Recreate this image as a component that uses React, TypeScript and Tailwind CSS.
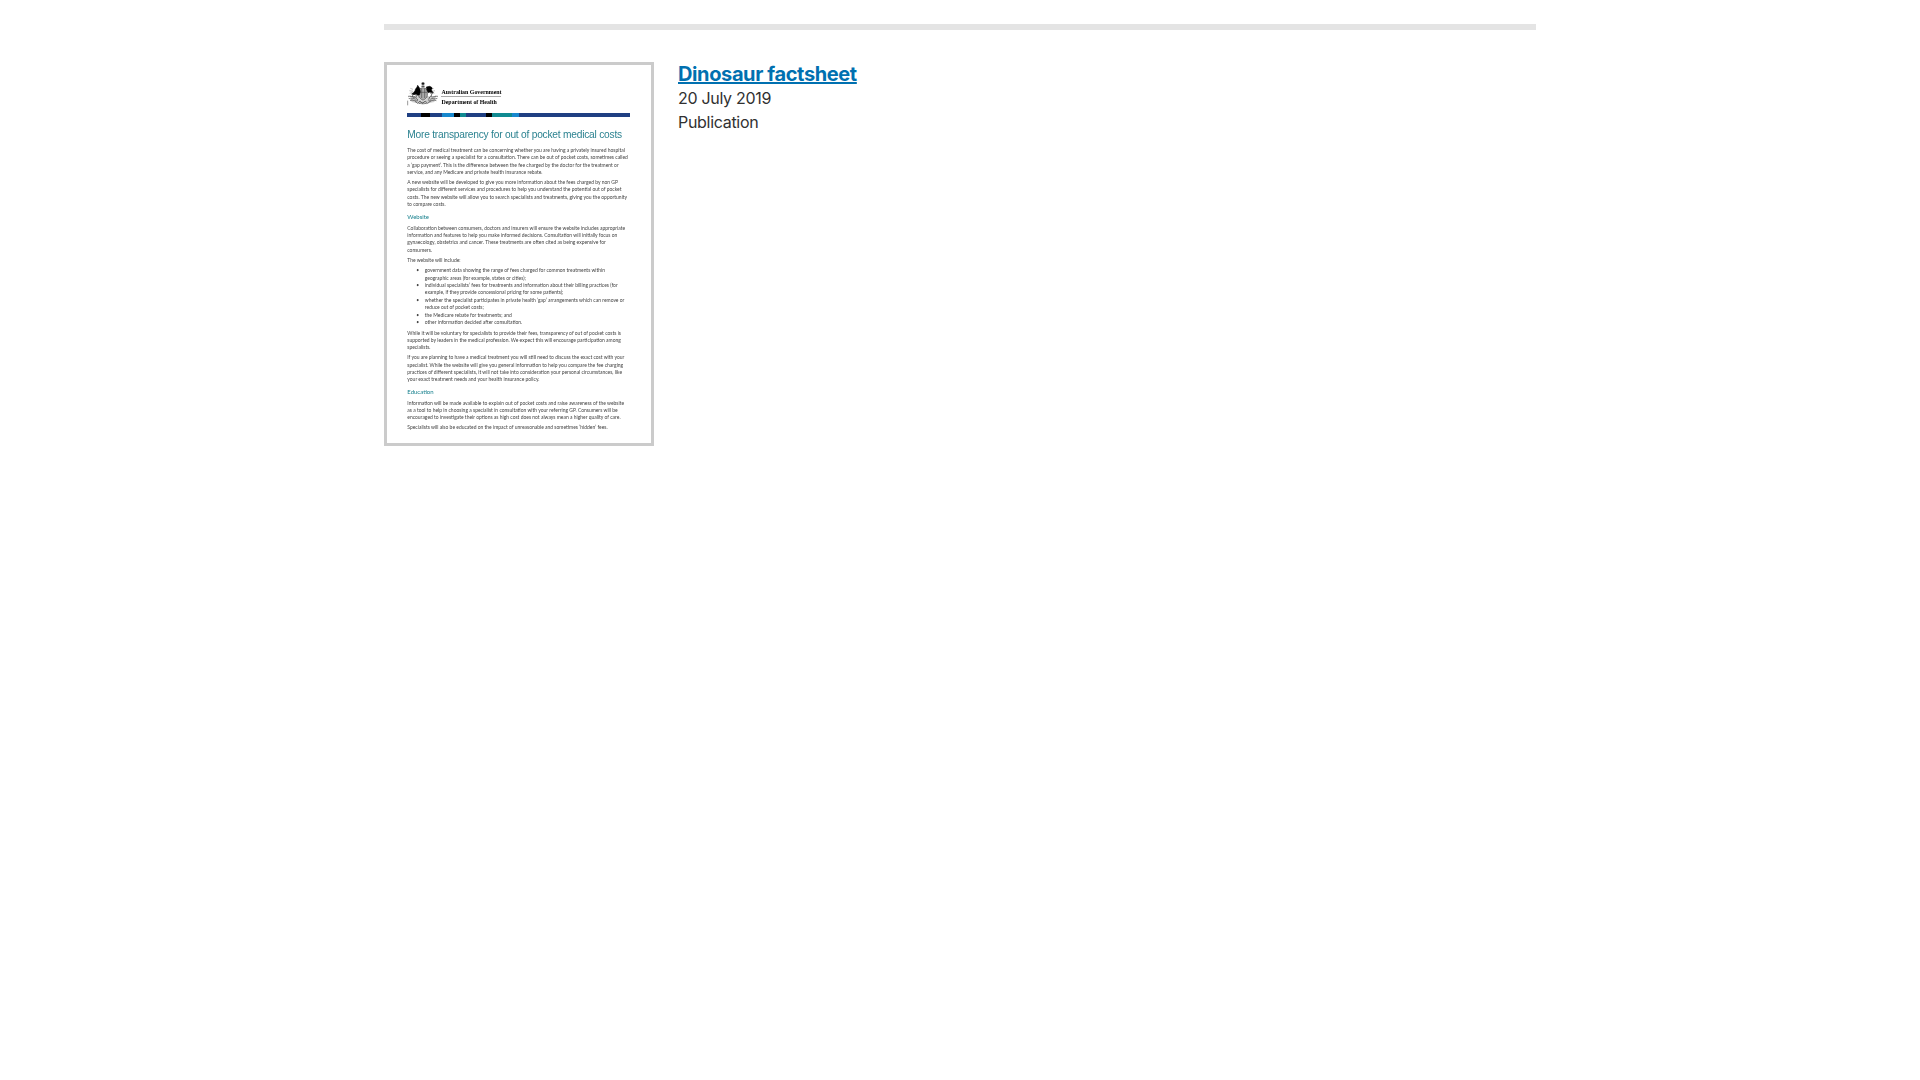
const intro = [
  [
    "The cost of medical treatment can be concerning whether you are having a privately insured hospital",
    "procedure or seeing a specialist for a consultation. There can be out of pocket costs, sometimes called",
    "a ‘gap payment’. This is the difference between the fee charged by the doctor for the treatment or",
    "service, and any Medicare and private health insurance rebate.",
  ],
  [
    "A new website will be developed to give you more information about the fees charged by non GP",
    "specialists for different services and procedures to help you understand the potential out of pocket",
    "costs. The new website will allow you to search specialists and treatments, giving you the opportunity",
    "to compare costs.",
  ],
];

const website = [
  [
    "Collaboration between consumers, doctors and insurers will ensure the website includes appropriate",
    "information and features to help you make informed decisions. Consultation will initially focus on",
    "gynaecology, obstetrics and cancer. These treatments are often cited as being expensive for",
    "consumers.",
  ],
  ["The website will include:"],
];

const bullets = [
  [
    "government data showing the range of fees charged for common treatments within",
    "geographic areas (for example, states or cities);",
  ],
  [
    "individual specialists’ fees for treatments and information about their billing practices (for",
    "example, if they provide concessional pricing for some patients);",
  ],
  [
    "whether the specialist participates in private health ‘gap’ arrangements which can remove or",
    "reduce out of pocket costs;",
  ],
  ["the Medicare rebate for treatments; and"],
  ["other information decided after consultation."],
];

const planning = [
  [
    "While it will be voluntary for specialists to provide their fees, transparency of out of pocket costs is",
    "supported by leaders in the medical profession. We expect this will encourage participation among",
    "specialists.",
  ],
  [
    "If you are planning to have a medical treatment you will still need to discuss the exact cost with your",
    "specialist. While the website will give you general information to help you compare the fee charging",
    "practices of different specialists, it will not take into consideration your personal circumstances, like",
    "your exact treatment needs and your health insurance policy.",
  ],
];

const education = [
  [
    "Information will be made available to explain out of pocket costs and raise awareness of the website",
    "as a tool to help in choosing a specialist in consultation with your referring GP. Consumers will be",
    "encouraged to investigate their options as high cost does not always mean a higher quality of care.",
  ],
  ["Specialists will also be educated on the impact of unreasonable and sometimes ‘hidden’ fees."],
];

function Paragraphs({ items }: { items: string[][] }) {
  return (
    <div className="flex flex-col gap-[3px]">
      {items.map((lines) => (
        <p key={lines[0]}>
          {lines.map((line) => (
            <span key={line} className="block">{line}</span>
          ))}
        </p>
      ))}
    </div>
  );
}

function Crest() {
  return (
    <svg viewBox="0 0 96 72" className="h-6 w-8 shrink-0" fill="none" stroke="#333" strokeWidth="1.8">
      <path d="M48 0l1.500 3 3.500 0-2.500 2.500 1 3.500-3.500-2-3.500 2 1-3.500L43 3h3.500z" fill="#111" stroke="#111" strokeWidth="1" />
      <path d="M43 13h10M48 10v5" strokeWidth="2.500" />
      <path d="M8 40q16 6 27 2l3 10 10 6 10-6 3-10q14 4 27-2l-6 20-18 4-16 4-16-4-18-4z" fill="#ccc" stroke="none" />
      <path d="M35 24q13-14 26 0v16c0 8-6 11-13 15-7-4-13-7-13-15z" fill="#aaa" />
      <path d="M36 31h24M44 20v28M53 20v28" stroke="#444" />
      <path d="M32 10l-2 6-4 4-2 6-5 7-5 3 7 2 6-2 5 4 6-2 2-10-2-9z" fill="#000" stroke="#000" />
      <path d="M58 15l10-2 6 3 2 4-3 2 2 5 4 5-3 2-7-4-5 2-4-7z" fill="#000" stroke="#000" />
      <path d="M22 36l7 5-3 7 7 6M70 32l5 7-7 6-3 8M19 38l-4 5 8 4" strokeWidth="2" />
      <path d="M3 43c8-2 15 5 22 0M5 49c9 5 14-3 21 3M9 56c9-5 16 4 24 0M93 43c-8-2-15 5-22 0M91 49c-9 5-14-3-21 3M88 56c-9-5-16 4-24 0" />
      <path d="M10 19l8 3M7 26l11 2M8 34l9-3M82 34l-9-2M84 26l-7 2M80 19l-3 3" stroke="#888" strokeWidth="1.500" />
      <path d="M24 58l8 6 7-7 7 8 8-8 8 7 10-8M35 65l10-3 14 3" stroke="#444" strokeWidth="2" />
      <path d="M2 56v14" strokeWidth="1.500" />
    </svg>
  );
}

function DocumentPreview() {
  return (
    <div className="h-[384px] w-[270px] shrink-0 overflow-hidden border-[3px] border-[#cbcbcb] bg-white">
      <div className="pl-[20.300px] pt-[17px] font-['Lato',sans-serif] text-[4.99px] leading-[7.25px] whitespace-nowrap text-[#444] blur-[0.3px]">
        <div className="flex h-[31px]">
          <Crest />
          <div className="ml-[2.200px] mt-[6px] w-[60px] font-['Liberation_Serif',serif] text-[5.9px] font-bold leading-[8px] text-black">
            <div className="h-[9px] border-b border-[#aaa]">Australian Government</div>
            <div className="mt-px">Department of Health</div>
          </div>
        </div>
        <div className="flex h-1 w-[223px] bg-[#1f3f82]">
          <div className="ml-[14px] w-[9px] bg-black" />
          <div className="ml-[12px] w-[12px] bg-[#1788ce]" />
          <div className="w-[6px] bg-black" />
          <div className="w-[6px] bg-[#108a91]" />
          <div className="ml-[20px] w-[6px] bg-black" />
          <div className="w-[20px] bg-[#108a91]" />
          <div className="w-[7px] bg-[#1788ce]" />
        </div>
        <h2 className="mt-[10px] h-[20.200px] font-['Liberation_Sans',sans-serif] text-[10.2px] leading-[15px] tracking-[-0.22px] text-[#2b8290]">
          More transparency for out of pocket medical costs
        </h2>
        <Paragraphs items={intro} />
        <h3 className="mt-[5.200px] mb-[4.200px] text-[6px] leading-[7.25px] text-[#147f8c]">Website</h3>
        <Paragraphs items={website} />
        <ul className="mt-[3px] pl-[9px] leading-[7.45px]">
          {bullets.map((lines) => (
            <li key={lines[0]} className="flex">
              <span className="w-[8.500px] shrink-0">•</span>
              <span>
                {lines.map((line) => (
                  <span key={line} className="block">{line}</span>
                ))}
              </span>
            </li>
          ))}
        </ul>
        <div className="mt-[3px]">
          <Paragraphs items={planning} />
        </div>
        <h3 className="mt-[5px] mb-[4px] text-[6px] leading-[7.25px] text-[#147f8c]">Education</h3>
        <Paragraphs items={education} />
      </div>
    </div>
  );
}

export default function App() {
  return (
    <main className="mx-auto min-h-screen w-[1152px] bg-white pt-6 font-['Inter',sans-serif] text-[#313131]">
      <div className="h-1.5 bg-[#e4e4e4]" />
      <article className="mt-8 flex gap-6">
        <DocumentPreview />
        <div className="text-base leading-6 tracking-[-0.3px]">
          <h1 className="text-xl leading-6 font-bold tracking-[-0.38px]">
            <a href="#" className="text-[#0070b0] underline">Dinosaur factsheet</a>
          </h1>
          <p>20 July 2019</p>
          <p>Publication</p>
        </div>
      </article>
    </main>
  );
}
